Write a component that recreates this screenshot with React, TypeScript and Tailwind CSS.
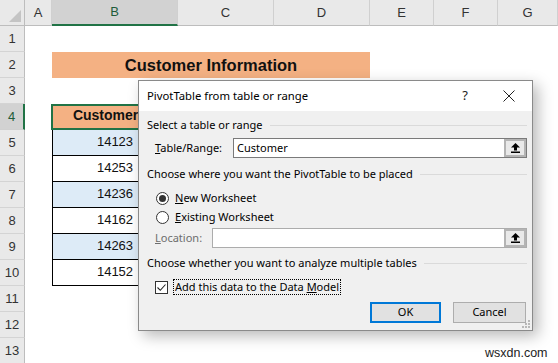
import React from 'react';

const cols = ['A', 'B', 'C', 'D', 'E', 'F', 'G'];
const ids = [14123, 14253, 14236, 14162, 14263, 14152];

function UploadIcon() {
  return (
    <svg width="11" height="12" viewBox="0 0 11 12">
      <polygon points="5.5,1 10,5.5 1,5.5" fill="#000" />
      <rect x="4" y="5" width="3" height="3.5" fill="#000" />
      <rect x="1" y="9.5" width="9" height="1.5" fill="#000" />
    </svg>
  );
}

function RefButton() {
  return (
    <div className="flex h-full w-[22px] items-center justify-center border-2 border-[#b4b4b4] bg-[#e9e9e9]">
      <UploadIcon />
    </div>
  );
}

function SectionTitle({ text }: { text: string }) {
  return (
    <div className="flex h-[18px] items-center gap-[7px] pr-[5px]">
      <span>{text}</span>
      <div className="h-px flex-1 bg-[#dadada]" />
    </div>
  );
}

function Radio({ checked }: { checked?: boolean }) {
  return (
    <div className="flex h-[13px] w-[13px] items-center justify-center rounded-full border border-[#333] bg-white">
      {checked && <div className="h-[7px] w-[7px] rounded-full bg-[#333]" />}
    </div>
  );
}

function Dialog() {
  return (
    <div className="absolute left-[138px] top-[80px] flex h-[251px] w-[395px] flex-col border border-[#8a8a8a] bg-[#f0f0f0] text-[11px] text-[#000] shadow-[5px_5px_14px_rgba(0,0,0,0.28)] [font-family:'Noto_Sans',sans-serif]">
      {/* title bar */}
      <div className="flex h-[30px] items-center bg-white pl-[8px]">
        <span className="flex-1 text-[11.3px]">PivotTable from table or range</span>
        <span className="mr-[11px] w-[20px] text-center text-[13px] text-[#222]">?</span>
        <div className="flex w-[46px] justify-center">
          <svg width="12" height="12" viewBox="0 0 12 12">
            <path d="M0.5 0.5 L11.5 11.5 M11.5 0.5 L0.5 11.5" stroke="#222" strokeWidth="1" />
          </svg>
        </div>
      </div>

      {/* body */}
      <div className="relative flex flex-1 flex-col pl-[8px]">
        <div className="mt-[5px]">
          <SectionTitle text="Select a table or range" />
        </div>

        <div className="mt-[4px] flex h-[20px] items-center pl-[8px] pr-[5px]">
          <span className="w-[78px]">
            <span className="underline">T</span>able/Range:
          </span>
          <div className="flex h-full flex-1 items-center border border-[#7a7a7a] bg-white pl-[3px]">
            <span className="flex-1">Customer</span>
            <RefButton />
          </div>
        </div>

        <div className="mt-[7px]">
          <SectionTitle text="Choose where you want the PivotTable to be placed" />
        </div>

        <div className="mt-[6px] flex h-[18px] items-center gap-[6px] pl-[9px]">
          <Radio checked />
          <span>
            <span className="underline">N</span>ew Worksheet
          </span>
        </div>
        <div className="mt-px flex h-[18px] items-center gap-[6px] pl-[9px]">
          <Radio />
          <span>
            <span className="underline">E</span>xisting Worksheet
          </span>
        </div>

        <div className="mt-[2px] flex h-[20px] items-center pl-[8px] pr-[5px]">
          <span className="w-[57px] text-[#6d6d6d]">
            <span className="underline">L</span>ocation:
          </span>
          <div className="flex h-full flex-1 items-center border border-[#acacac] bg-white">
            <span className="flex-1" />
            <RefButton />
          </div>
        </div>

        <div className="mt-[6px]">
          <SectionTitle text="Choose whether you want to analyze multiple tables" />
        </div>

        <div className="mt-[6px] flex h-[18px] items-center gap-[5px] pl-[8px]">
          <div className="flex h-[13px] w-[13px] items-center justify-center border border-[#333] bg-white">
            <svg width="11" height="11" viewBox="0 0 11 11">
              <path d="M1.5 5.5 L4.3 8.3 L9.5 2.5" stroke="#222" strokeWidth="1.1" fill="none" />
            </svg>
          </div>
          <span className="border border-dotted border-black px-px leading-[14px]">
            Add this data to the Data <span className="underline">M</span>odel
          </span>
        </div>

        <div className="mt-[6px] flex h-[21px] justify-end gap-[12px] pr-[6px]">
          <div className="flex w-[71px] items-center justify-center border-2 border-[#0078d7] bg-[#e1e1e1]">
            OK
          </div>
          <div className="flex w-[73px] items-center justify-center border border-[#adadad] bg-[#e1e1e1]">
            Cancel
          </div>
        </div>

        <svg className="absolute bottom-[1px] right-[1px]" width="9" height="9" viewBox="0 0 9 9">
          <rect x="6" y="0" width="2" height="2" fill="#b8b8b8" />
          <rect x="3" y="3" width="2" height="2" fill="#b8b8b8" />
          <rect x="6" y="3" width="2" height="2" fill="#b8b8b8" />
          <rect x="0" y="6" width="2" height="2" fill="#b8b8b8" />
          <rect x="3" y="6" width="2" height="2" fill="#b8b8b8" />
          <rect x="6" y="6" width="2" height="2" fill="#b8b8b8" />
        </svg>
      </div>
    </div>
  );
}

export default function App() {
  const rows = Array.from({ length: 13 }, (_, i) => i + 1);

  return (
    <div className="relative h-[363px] w-[558px] overflow-hidden bg-white [font-family:'Liberation_Sans',Arial,sans-serif]">
      <div className="grid grid-cols-[25px_27px_126px_96px_96px_64px_64px_1fr]">
        {/* column headers */}
        <div className="relative h-[26px] border-b border-r border-[#bdbdbd] bg-[#e9e9e9]">
          <svg className="absolute bottom-[3px] right-[3px]" width="12" height="12" viewBox="0 0 12 12">
            <polygon points="12,0 12,12 0,12" fill="#c4c4c4" />
          </svg>
        </div>
        {cols.map((c) =>
          c === 'B' ? (
            <div
              key={c}
              className="flex h-[26px] items-center justify-center border-b-2 border-r border-b-[#217346] border-r-[#d0d0d0] bg-[#d2d2d2] text-[13px] text-[#1e5c3a]"
            >
              {c}
            </div>
          ) : (
            <div
              key={c}
              className="flex h-[26px] items-center justify-center border-b border-r border-b-[#bdbdbd] border-r-[#d0d0d0] bg-[#e9e9e9] text-[13px] text-[#333]"
            >
              {c}
            </div>
          )
        )}

        {rows.map((r) => (
          <React.Fragment key={r}>
            {r === 4 ? (
              <div className="flex h-[26px] items-end justify-center border-b border-r-2 border-b-[#d0d0d0] border-r-[#217346] bg-[#d2d2d2] pb-[3px] text-[13px] text-[#1e5c3a]">
                {r}
              </div>
            ) : (
              <div className="flex h-[26px] items-end justify-center border-b border-r border-b-[#d4d4d4] border-r-[#bdbdbd] bg-[#e9e9e9] pb-[3px] text-[13px] text-[#333]">
                {r}
              </div>
            )}
            <div className="h-[26px]" />
            {r === 2 && (
              <div className="col-span-3 flex h-[26px] items-center justify-center bg-[#f4b183] text-[16.5px] font-bold text-[#111]">
                Customer Information
              </div>
            )}
            {r === 4 && (
              <div className="-ml-px flex h-[26px] items-end justify-center border-2 border-[#217346] bg-[#f4b183] pb-[2px] text-[14px] font-bold text-[#111]">
                Customer ID
              </div>
            )}
            {r >= 5 && r <= 10 && (
              <div
                className={
                  r % 2 === 1
                    ? 'flex h-[26px] items-end justify-center border-x border-b border-black bg-[#ddebf7] pb-[4px] text-[13px] text-[#111]'
                    : 'flex h-[26px] items-end justify-center border-x border-b border-black bg-white pb-[4px] text-[13px] text-[#111]'
                }
              >
                {ids[r - 5]}
              </div>
            )}
            {(r < 4 || r > 10) && r !== 2 && <div className="h-[26px]" />}
            {r !== 2 && <div className="h-[26px]" />}
            {r !== 2 && <div className="h-[26px]" />}
            <div className="h-[26px]" />
            <div className="h-[26px]" />
            <div className="h-[26px]" />
          </React.Fragment>
        ))}
      </div>

      <Dialog />

      <div className="absolute left-[485px] top-[344px] text-[12.5px] text-[#222]">wsxdn.com</div>
    </div>
  );
}
